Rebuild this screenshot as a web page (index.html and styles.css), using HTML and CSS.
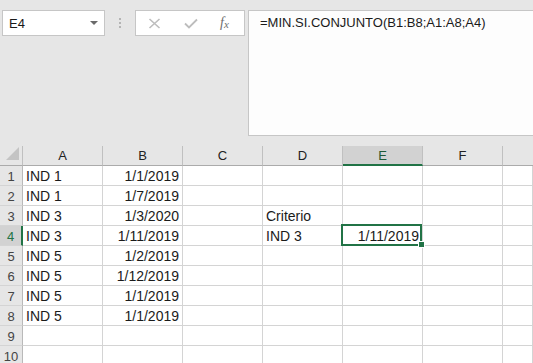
FILE: index.html
```html
<!DOCTYPE html>
<html lang="es">
<head>
<meta charset="UTF-8" />
<title>Excel - MIN.SI.CONJUNTO</title>
<link rel="stylesheet" href="styles.css">
</head>
<body>

<div class="toolbar">
  <div class="namebox">
    <span>E4</span>
    <svg class="caret" width="8" height="4" viewBox="0 0 8 4"><polygon points="0,0 8,0 4,4" fill="#6a6a6a"/></svg>
  </div>
  <div class="grip"><i></i><i></i><i></i></div>
  <div class="fx-buttons">
    <svg width="13" height="11" viewBox="0 0 13 11"><path d="M1.5 1 L11.5 10 M11.5 1 L1.5 10" stroke="#bdbdbd" stroke-width="1.6" fill="none"/></svg>
    <svg width="14" height="11" viewBox="0 0 14 11"><path d="M1 5.5 L5 9.5 L13 1.5" stroke="#bdbdbd" stroke-width="1.8" fill="none"/></svg>
    <span class="fx">f<sub>x</sub></span>
  </div>
  <div class="formula">=MIN.SI.CONJUNTO(B1:B8;A1:A8;A4)</div>
</div>

<div class="sheet">
  <div class="row head">
    <div class="rh corner"><svg width="13" height="13" viewBox="0 0 13 13"><polygon points="13,0 13,13 0,13" fill="#c4c4c4"/></svg></div>
    <div class="c">A</div><div class="c">B</div><div class="c">C</div><div class="c">D</div>
    <div class="c sel">E</div><div class="c">F</div><div class="c last"></div>
  </div>
  <div class="row">
    <div class="rh">1</div>
    <div class="c">IND 1</div><div class="c num">1/1/2019</div><div class="c"></div><div class="c"></div><div class="c"></div><div class="c"></div><div class="c last"></div>
  </div>
  <div class="row">
    <div class="rh">2</div>
    <div class="c">IND 1</div><div class="c num">1/7/2019</div><div class="c"></div><div class="c"></div><div class="c"></div><div class="c"></div><div class="c last"></div>
  </div>
  <div class="row">
    <div class="rh">3</div>
    <div class="c">IND 3</div><div class="c num">1/3/2020</div><div class="c"></div><div class="c">Criterio</div><div class="c"></div><div class="c"></div><div class="c last"></div>
  </div>
  <div class="row">
    <div class="rh sel">4</div>
    <div class="c">IND 3</div><div class="c num">1/11/2019</div><div class="c"></div><div class="c">IND 3</div><div class="c num active">1/11/2019</div><div class="c"></div><div class="c last"></div>
  </div>
  <div class="row">
    <div class="rh">5</div>
    <div class="c">IND 5</div><div class="c num">1/2/2019</div><div class="c"></div><div class="c"></div><div class="c"></div><div class="c"></div><div class="c last"></div>
  </div>
  <div class="row">
    <div class="rh">6</div>
    <div class="c">IND 5</div><div class="c num">1/12/2019</div><div class="c"></div><div class="c"></div><div class="c"></div><div class="c"></div><div class="c last"></div>
  </div>
  <div class="row">
    <div class="rh">7</div>
    <div class="c">IND 5</div><div class="c num">1/1/2019</div><div class="c"></div><div class="c"></div><div class="c"></div><div class="c"></div><div class="c last"></div>
  </div>
  <div class="row">
    <div class="rh">8</div>
    <div class="c">IND 5</div><div class="c num">1/1/2019</div><div class="c"></div><div class="c"></div><div class="c"></div><div class="c"></div><div class="c last"></div>
  </div>
  <div class="row">
    <div class="rh">9</div>
    <div class="c"></div><div class="c"></div><div class="c"></div><div class="c"></div><div class="c"></div><div class="c"></div><div class="c last"></div>
  </div>
  <div class="row">
    <div class="rh">10</div>
    <div class="c"></div><div class="c"></div><div class="c"></div><div class="c"></div><div class="c"></div><div class="c"></div><div class="c last"></div>
  </div>
</div>

</body>
</html>
```

FILE: styles.css
```css
html, body {
  margin: 0; padding: 0;
  height: 100%;
  overflow: hidden;
  background: #e6e6e6;
  font-family: "Liberation Sans", Arial, sans-serif;
  color: #1a1a1a;
}
.toolbar {
  display: flex;
  align-items: flex-start;
  padding: 10px 0 0 2px;
  margin-bottom: 10px;
}
.namebox {
  box-sizing: border-box;
  width: 103px;
  height: 26px;
  background: #fff;
  border: 1px solid #c6c6c6;
  display: flex;
  align-items: center;
  justify-content: space-between;
  padding: 0 6px 0 6px;
  font-size: 13px;
}
.namebox span { padding-top: 1px; }
.grip {
  width: 30px;
  height: 26px;
  display: flex;
  flex-direction: column;
  align-items: center;
  justify-content: center;
  gap: 2px;
}
.grip i {
  display: block;
  width: 2px; height: 2px;
  background: #b4b4b4;
}
.fx-buttons {
  box-sizing: border-box;
  width: 110px;
  height: 26px;
  background: #fff;
  border: 1px solid #c6c6c6;
  display: flex;
  align-items: center;
  padding-left: 12px;
  gap: 23px;
}
.fx {
  font-family: "Liberation Serif", "Times New Roman", serif;
  font-style: italic;
  font-size: 14px;
  color: #6e6e6e;
  margin-left: -1px;
}
.fx sub { font-size: 11px; vertical-align: -1px; }
.formula {
  box-sizing: border-box;
  flex: 1;
  height: 126px;
  margin-left: 3px;
  margin-right: -2px;
  background: #fdfdfd;
  border: 1px solid #c6c6c6;
  padding: 4px 0 0 11px;
  font-size: 13px;
  color: #1a1a1a;
}
.sheet { background: #fff; }
.row {
  display: flex;
  height: 20px;
}
.rh, .c {
  box-sizing: border-box;
  height: 20px;
  border-bottom: 1px solid #d4d4d4;
  border-right: 1px solid #d4d4d4;
  font-size: 14px;
  line-height: 21px;
  white-space: nowrap;
}
.rh {
  width: 23px;
  flex: none;
  background: #e6e6e6;
  border-right-color: #b9b9b9;
  text-align: center;
  font-size: 13px;
  color: #444;
}
.c {
  width: 80px;
  flex: none;
  padding: 0 3px;
}
.c.last { flex: 1; }
.c.num { text-align: right; }
.head .c, .head .rh {
  background: #e6e6e6;
  border-bottom-color: #ababab;
  border-right-color: #c0c0c0;
  text-align: center;
  font-size: 13px;
  line-height: 20px;
  color: #222;
}
.head .c.last { border-right: none; }
.corner { display: flex; align-items: flex-end; justify-content: flex-end; padding: 0 3px 5px 0; }
.head .c.sel {
  background: #d2d2d2;
  border-bottom: 2px solid #217346;
  color: #1d5a37;
}
.rh.sel {
  background: #d2d2d2;
  border-right: 2px solid #217346;
  color: #217346;
}
.c.active { position: relative; }
.c.active::before {
  content: "";
  position: absolute;
  left: -2px; top: -2px; right: 0; bottom: -1px;
  border: 2px solid #217346;
}
.c.active::after {
  content: "";
  position: absolute;
  right: -3px; bottom: -3px;
  width: 5px; height: 5px;
  background: #217346;
  border: 1px solid #fff;
}
```
